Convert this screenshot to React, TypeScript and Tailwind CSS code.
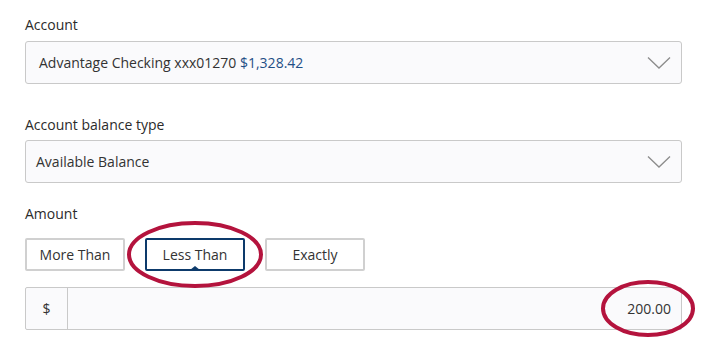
import { useState } from "react";

const FONT = "font-['Open_Sans','Noto_Sans',sans-serif]";

const MODES = ["More Than", "Less Than", "Exactly"] as const;
type Mode = (typeof MODES)[number];

function Chevron() {
	return (
		<svg width="24" height="14" viewBox="0 0 24 14" fill="none" aria-hidden="true">
			<path d="M1 1.5 L12 12 L23 1.5" stroke="#8c8c8c" strokeWidth="1.3" />
		</svg>
	);
}

function SelectBox({ children, padLeft }: { children: React.ReactNode; padLeft: string }) {
	return (
		<div
			className={`flex h-[43px] items-center justify-between rounded-[3px] border border-[#c9c9c9] bg-[#fafafc] pr-[10px] ${padLeft}`}
		>
			<span className="text-[14px] text-[#333]">{children}</span>
			<Chevron />
		</div>
	);
}

function ModeButton({ label, active, onClick }: { label: Mode; active: boolean; onClick: () => void }) {
	return (
		<button
			type="button"
			onClick={onClick}
			className={`relative h-[33px] w-[100px] rounded-[2px] border-2 bg-white text-[14px] text-[#333] ${
				active ? "border-[#0d3a6b]" : "border-[#d0d0d0]"
			}`}
		>
			{label}
			{active ? (
				<span className="absolute bottom-[-1px] left-1/2 h-0 w-0 -translate-x-1/2 border-x-[5px] border-b-[4px] border-x-transparent border-b-[#0d3a6b]" />
			) : null}
		</button>
	);
}

export default function App() {
	const [mode, setMode] = useState<Mode>("Less Than");

	return (
		<div className={`relative h-[361px] w-[705px] bg-white ${FONT}`}>
			<div className="w-[682px] pl-[25px] pt-[15px]">
				<div className="mb-[6px] text-[14px] leading-[20px] text-[#2b2b2b]">Account</div>
				<SelectBox padLeft="pl-[13px]">
					Advantage Checking xxx01270 <span className="text-[#1f4f86]">$1,328.42</span>
				</SelectBox>

				<div className="mb-[5px] mt-[31px] text-[14px] leading-[20px] text-[#2b2b2b]">
					Account balance type
				</div>
				<SelectBox padLeft="pl-[10px]">Available Balance</SelectBox>

				<div className="mb-[14px] mt-[21px] text-[14px] leading-[20px] text-[#2b2b2b]">Amount</div>
				<div className="flex gap-[20px]">
					{MODES.map((m) => (
						<ModeButton key={m} label={m} active={m === mode} onClick={() => setMode(m)} />
					))}
				</div>

				<div className="mt-[16px] flex h-[43px] rounded-[2px] border border-[#c9c9c9] bg-[#fafafc]">
					<div className="flex w-[42px] items-center justify-center border-r border-[#c9c9c9] text-[14px] text-[#333]">
						$
					</div>
					<div className="flex flex-1 items-center justify-end pr-[10px] text-[14px] text-[#333]">200.00</div>
				</div>
			</div>

			{/* Highlight rings drawn over the form */}
			<svg className="pointer-events-none absolute inset-0" width="705" height="361" aria-hidden="true">
				<ellipse cx="195" cy="254.5" rx="66" ry="31.5" fill="none" stroke="#b4133d" strokeWidth="4" />
				<ellipse cx="648" cy="308.5" rx="45" ry="26.5" fill="none" stroke="#b4133d" strokeWidth="4" />
			</svg>
		</div>
	);
}
